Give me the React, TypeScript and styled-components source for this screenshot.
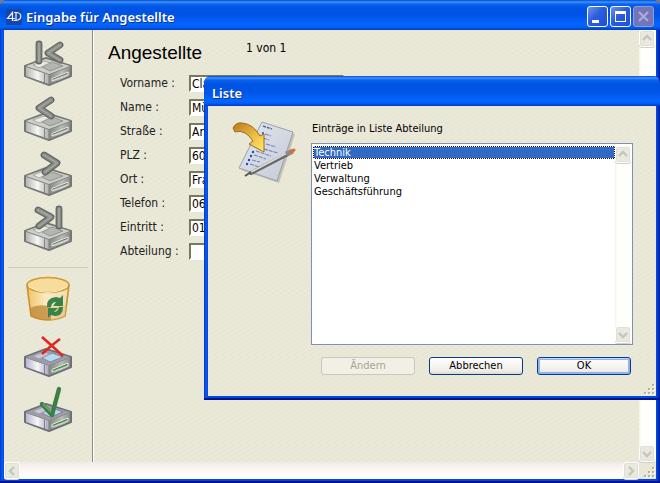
import React, { useId, useState } from "react";
import styled, { createGlobalStyle } from "styled-components";

const uiFont = '"DejaVu Sans Condensed", "DejaVu Sans", "Noto Sans", sans-serif';
const titleFont = '"Noto Sans", "Open Sans", sans-serif';

const GlobalStyle = createGlobalStyle`
  *, *::before, *::after { box-sizing: border-box; }
  body { margin: 0; background: #7b7b7b; font-family: ${uiFont}; color: #000; }
  button, input, select { font: inherit; color: inherit; margin: 0; }
`;

const texture = `
  repeating-linear-gradient(150deg, rgba(255,255,255,.16) 0 1px, transparent 1px 4px),
  #e8e6d4`;

const Frame = styled.div`
  display: flex;
  flex-direction: column;
  background: linear-gradient(90deg, #0034c8, #0a5cf5 2px, #0048e0 4px, #0048e0 calc(100% - 3px), #00138c);
  padding: 0 4px 4px;
  border-radius: 7px 7px 0 0;
  box-shadow: inset 0 -2px #00138c;
  overflow: hidden;
`;

const MainFrame = styled(Frame)`
  position: relative;
  min-height: 100vh;
`;

const DialogFrame = styled(Frame)`
  position: absolute;
  left: 204px;
  right: 0;
  top: 76px;
`;

const TitleBar = styled.header`
  display: flex;
  align-items: center;
  gap: 4px;
  height: 30px;
  margin: 0 -4px;
  padding: 3px 6px 0;
  flex: none;
  background: linear-gradient(#0848c8, #3c96ff 2px, #0a64f0 4px, #0054e3 8px, #0054e6 16px, #0466ff 24px, #0360f8 27px, #003cc0);
`;

const Title = styled.h1<{ $indent?: boolean }>`
  flex: 1;
  margin: 0;
  padding-left: ${(p) => (p.$indent ? 2 : 0)}px;
  font: 600 13px/18px ${titleFont};
  color: #fff;
  text-shadow: 1px 1px #0a2f8c;
`;

const Caption = styled.div`
  display: flex;
  gap: 2px;
`;

const CaptionButton = styled.button<{ $muted?: boolean }>`
  width: 21px;
  height: 21px;
  padding: 0;
  display: grid;
  place-items: center;
  border: 1px solid ${(p) => (p.$muted ? "#8d9cdc" : "#fff")};
  border-radius: 3px;
  background: ${(p) =>
    p.$muted ? "#7474b8" : "linear-gradient(135deg, #6c94f0, #2c5cdc 45%, #1c50d8)"};
`;

const Workspace = styled.div`
  flex: 1;
  display: grid;
  grid-template-columns: 89px 1fr 17px;
  grid-template-rows: 1fr 17px;
  background: ${texture};
`;

const Toolbar = styled.nav`
  display: flex;
  flex-direction: column;
  align-items: center;
  gap: 7px;
  padding: 8px 4px 0;
  border-right: 1px solid #8c8c80;
`;

const ToolButton = styled.button`
  width: 48px;
  height: 48px;
  padding: 0;
  border: 0;
  background: none;
  svg { display: block; }
`;

const Separator = styled.hr`
  width: 100%;
  margin: 9px 0 -1px;
  border: 0;
  border-top: 1px solid #d0cab8;
`;

const Form = styled.form`
  border-left: 1px solid #fff;
  padding: 9px 14px;
`;

const Heading = styled.div`
  display: flex;
  align-items: flex-start;
  gap: 44px;
  height: 36px;
`;

const FormTitle = styled.h2`
  margin: 0;
  font: normal 19px/27px "Liberation Sans", sans-serif;
`;

const Counter = styled.span`
  font-size: 12px;
  line-height: 18px;
`;

const Fields = styled.div`
  display: grid;
  gap: 8px;
  padding-left: 12px;
`;

const FieldRow = styled.div`
  display: grid;
  grid-template-columns: 69px 155px;
  height: 16px;
  font-size: 12px;
  line-height: 16px;
`;

const FieldLabel = styled.label`
  white-space: nowrap;
  color: #222;
`;

const Field = styled.input`
  width: 100%;
  height: 17px;
  min-width: 0;
  padding: 0 1px;
  border: 2px solid;
  border-color: #77785f #fff #fff #77785f;
  background: #fff;
`;

const ScrollTrack = styled.div<{ $horizontal?: boolean }>`
  display: flex;
  flex-direction: ${(p) => (p.$horizontal ? "row" : "column")};
  justify-content: space-between;
  background: ${(p) =>
    p.$horizontal ? "linear-gradient(#f1ebe6, #fffefc 75%)" : "linear-gradient(90deg, #f3f1e8, #fefefb 2px)"};
`;

const BottomTrack = styled(ScrollTrack)`
  grid-column: 1 / 3;
`;

const ScrollButton = styled.button`
  width: 16px;
  height: 17px;
  flex: none;
  padding: 0;
  display: grid;
  place-items: center;
  border: 1px solid #fff;
  border-radius: 3px;
  background: #eae9e0;
  box-shadow: inset 0 0 0 1px #e0dfd4, 0 1px #d2d1c2;
`;

const GripCorner = styled.div`
  display: flex;
  justify-content: flex-end;
  align-items: flex-end;
  padding: 0 1px 1px 0;
`;

const DialogGripCorner = styled(GripCorner)`
  padding-top: 9px;
`;

const DialogBody = styled.div`
  background: ${texture};
`;

const DialogContent = styled.div`
  display: grid;
  grid-template-columns: 64px 1fr;
  gap: 15px;
  padding: 14px 23px 0 24px;
`;

const ListColumn = styled.div`
  display: flex;
  flex-direction: column;
`;

const ListLabel = styled.label`
  padding-left: 1px;
  height: 23px;
  font-size: 11px;
  line-height: 18px;
`;

const ListFrame = styled.div`
  display: flex;
  height: 202px;
  border: 1px solid #7f8fb2;
  padding: 2px 1px 1px;
  background: #fff;
`;

const ListBox = styled.select`
  flex: 1;
  min-width: 0;
  border: 0;
  padding: 0;
  outline: 0;
  overflow: hidden;
  background: #fff;
  font-size: 11px;

  option {
    min-height: 13px;
    height: 13px;
    padding: 0 1px;
    line-height: 13px;
  }
  option:checked {
    background: linear-gradient(#316ac5, #316ac5);
    -webkit-text-fill-color: #fff;
    outline: 1px dotted #fff;
    outline-offset: -1px;
    box-shadow: inset 0 0 0 1px #111;
  }
`;

const Actions = styled.div`
  display: flex;
  justify-content: flex-end;
  gap: 14px;
  padding: 12px 2px 0 0;
`;

const PushButton = styled.button<{ $primary?: boolean }>`
  width: 94px;
  height: 18px;
  padding: 0;
  font-size: 11px;
  line-height: 14px;
  border: 1px solid #0a3a86;
  border-radius: 3px;
  background: linear-gradient(#fff, #f0eeea 80%, #dcd8d0);
  box-shadow: ${(p) => (p.$primary ? "inset 0 1px #bcd8ff, inset 0 0 0 2px #8fb2f2" : "none")};

  &:disabled {
    color: #a5a394;
    border-color: #cac8b8;
    background: #f2f0e6;
  }
`;

type Point = [number, number];

function Chevron({ kind }: { kind: "up" | "down" | "left" | "right" }) {
  const paths = {
    up: "M1 6 5 2l4 4",
    down: "M1 3l4 4 4-4",
    left: "M7 1 3 5l4 4",
    right: "M3 1l4 4-4 4",
  };
  return (
    <svg width="10" height="10" viewBox="0 0 10 10" aria-hidden="true">
      <path d={paths[kind]} fill="none" stroke="#c5c6ba" strokeWidth="2.4" />
    </svg>
  );
}

function Grip() {
  const dots: Point[] = [[8, 0], [4, 4], [8, 4], [0, 8], [4, 8], [8, 8]];
  return (
    <svg width="11" height="11" viewBox="0 0 11 11" aria-hidden="true">
      {dots.map(([x, y]) => (
        <g key={`${x}-${y}`}>
          <rect x={x + 1} y={y + 1} width="2" height="2" fill="#fff" />
          <rect x={x} y={y} width="2" height="2" fill="#b5b3a0" />
        </g>
      ))}
    </svg>
  );
}

function Drive({ active, children }: { active?: boolean; children?: React.ReactNode }) {
  const id = useId();
  const edge = active ? "#6d6f78" : "#747772";
  return (
    <svg width="48" height="48" viewBox="0 0 48 48" aria-hidden="true">
      <defs>
        <linearGradient id={`${id}l`}>
          <stop offset="0" stopColor={active ? "#b9b6d2" : "#b4b6b0"} />
          <stop offset=".5" stopColor="#f6f6f6" />
          <stop offset="1" stopColor={active ? "#a9a6c2" : "#adafa9"} />
        </linearGradient>
        <linearGradient id={`${id}r`}>
          <stop offset="0" stopColor="#858783" />
          <stop offset=".6" stopColor="#b9bbb6" />
          <stop offset="1" stopColor="#8b8d89" />
        </linearGradient>
      </defs>
      <path d="M1 28 22 20 47 28 47 38 25 47 1 38Z" fill="#cfd0ca" stroke={edge} strokeWidth="2" strokeLinejoin="round" />
      <path d="M2 28 22 21 46 28 25 36Z" fill={active ? "#9c9cab" : "#cdcfc9"} />
      <path d="M2 29 25 36.5V46L2 38Z" fill={`url(#${id}l)`} />
      <path d="M25 36.5 46 29V37.5L25 46Z" fill={`url(#${id}r)`} />
      <path d="M18 29 28 24 39 28 26 33Z" fill={active ? "#b7daf2" : "#b4b6b0"} stroke={active ? "#858898" : "#92958f"} />
      <path d="M9 27 20 23 26 25 15 30Z" fill={active ? "#c9c6d8" : "#e9e9e4"} stroke="#9b9d99" strokeWidth=".8" />
      <path d="M2 28.5 25 36.5 46 28.5M25 36.5V46M20.5 35.5V45" fill="none" stroke="#80827e" />
      <path d="M28 40.5 44 34V37L28 43Z" fill={active ? "#358040" : "#6a6d68"} stroke="#eceee8" />
      <path d="M29 42 43 36.5" stroke={active ? "#8fc48a" : "#d5d7d0"} strokeWidth=".8" />
      {children}
    </svg>
  );
}

function NavStroke({ d }: { d: string }) {
  return (
    <g fill="none" strokeLinecap="round" strokeLinejoin="round">
      <path d={d} stroke="#62665f" strokeWidth="6.8" />
      <path d={d} stroke="#848882" strokeWidth="4.6" />
      <path d={d} stroke="#a0a29e" strokeWidth="2" />
    </g>
  );
}

function BinIcon() {
  const id = useId();
  return (
    <svg width="48" height="48" viewBox="0 0 48 48" aria-hidden="true">
      <defs>
        <linearGradient id={id}>
          <stop offset="0" stopColor="#efc468" />
          <stop offset=".45" stopColor="#faeac0" />
          <stop offset="1" stopColor="#f0dcae" />
        </linearGradient>
      </defs>
      <path d="M3 11 7 42Q24 50 41 42L45 11Z" fill={`url(#${id})`} stroke="#c9922c" strokeWidth="1.6" />
      <path d="M6 34Q16 29 27 33V46Q14 46 7 42Z" fill="#c08a3a" opacity=".8" />
      <path d="M27 33 42 31 41 42Q35 45 27 46Z" fill="#e8c88a" opacity=".7" />
      <ellipse cx="24" cy="11" rx="21" ry="7.5" fill="#f8dc9c" stroke="#d19b35" strokeWidth="1.7" />
      <path d="M5 13Q24 24 43 13" fill="none" stroke="#fff3cf" />
      <path d="M23 33Q22 24 32 23L36 24 39 21V32H29L32 28Q28 28 27 33Z" fill="#36834b" />
      <path d="M39 33Q39 42 31 42L27 41 24 44V34H34L30 38Q34 38 35 33Z" fill="#36834b" />
    </svg>
  );
}

function ListIcon() {
  const id = useId();
  return (
    <svg width="64" height="64" viewBox="0 0 64 64" aria-hidden="true">
      <defs>
        <linearGradient id={`${id}a`} x1="0" y1="0" x2="1" y2="1">
          <stop offset="0" stopColor="#b5781c" />
          <stop offset=".55" stopColor="#eebb42" />
          <stop offset="1" stopColor="#fff06c" />
        </linearGradient>
        <linearGradient id={`${id}p`} x1="0" y1="0" x2="1" y2="1">
          <stop offset="0" stopColor="#e2e6ef" />
          <stop offset="1" stopColor="#c5cad8" />
        </linearGradient>
      </defs>
      <path d="M32 4 63 14 47 63 9 50Z" fill="#b1b1a4" opacity=".7" />
      <path d="M30 2 61 12 45 61 7 48Z" fill={`url(#${id}p)`} stroke="#9ba0ac" />
      <path d="M31 6 40 9" stroke="#5b6c9c" strokeWidth="1.5" strokeDasharray="3 1" />
      <g stroke="#7585b2" strokeWidth="1.1" strokeDasharray="4 1">
        <path d="M33 14 39 16M31 18 37 20M34 24 44 27M32 29 46 33M24 31 39 36M22 35 34 39M20 40 28 42M18 44 27 47" />
      </g>
      <g fill="#244ca8">
        <circle cx="31" cy="13" r="1" /><circle cx="29" cy="17" r="1" />
        <circle cx="21" cy="32" r="1.2" /><circle cx="19" cy="36" r="1.2" />
        <circle cx="17" cy="40" r="1.2" /><circle cx="15" cy="44" r="1.2" />
      </g>
      <path d="M1 8Q4 2 10 3Q20 4 26 13L28 16 32 14 32 32 17 24 21 21Q17 15 13 13Q8 10 3 12Z" fill={`url(#${id}a)`} stroke="#986d20" strokeLinejoin="round" />
      <path d="M19 53 58 33" stroke="#676a68" strokeWidth="4" strokeLinecap="round" />
      <path d="M19 52 57 32" stroke="#d9dbd6" strokeWidth="1.8" />
      <path d="M13 56 19 52" stroke="#555" strokeWidth="2" />
      <path d="M54 34 61 31" stroke="#8c8d8a" strokeWidth="5" />
      <path d="M59 32 62 30" stroke="#dc6a3c" strokeWidth="3" strokeLinecap="round" />
    </svg>
  );
}

function LogoIcon() {
  return (
    <svg width="16" height="16" viewBox="0 0 16 16" aria-label="4D">
      <rect width="16" height="16" fill="#1546a8" />
      <path d="M6.500 12V3.500L1.500 9.500H9M8 3.500h2.500Q15 4 14.800 7.500T10 11.500H7.500M10 4v7" fill="none" stroke="#e8f1ff" strokeWidth="1.2" />
    </svg>
  );
}

const navigation = [
  { label: "Erster Datensatz", d: "M15 6V23M36 7 24 15 36 22" },
  { label: "Vorheriger Datensatz", d: "M27 7 15 15 27 23" },
  { label: "Nächster Datensatz", d: "M20 7 33 15 21 24" },
  { label: "Letzter Datensatz", d: "M14 7 27 14 15 23M35 6V23" },
];

const fields = [
  ["Vorname", "Cla"],
  ["Name", "Mü"],
  ["Straße", "An"],
  ["PLZ", "60"],
  ["Ort", "Fra"],
  ["Telefon", "06"],
  ["Eintritt", "01"],
  ["Abteilung", ""],
];

const entries = ["Technik", "Vertrieb", "Verwaltung", "Geschäftsführung"];

function VerticalScroll() {
  return (
    <ScrollTrack>
      <ScrollButton type="button" aria-label="Nach oben"><Chevron kind="up" /></ScrollButton>
      <ScrollButton type="button" aria-label="Nach unten"><Chevron kind="down" /></ScrollButton>
    </ScrollTrack>
  );
}

function ListDialog() {
  const [entry, setEntry] = useState(entries[0]);
  return (
    <DialogFrame role="dialog" aria-labelledby="dialog-title">
      <TitleBar>
        <Title as="h2" id="dialog-title" $indent>Liste</Title>
      </TitleBar>
      <DialogBody>
        <DialogContent>
          <ListIcon />
          <ListColumn>
            <ListLabel htmlFor="entries">Einträge in Liste Abteilung</ListLabel>
            <ListFrame>
              <ListBox id="entries" size={15} value={entry} onChange={(e) => setEntry(e.target.value)}>
                {entries.map((name) => <option key={name}>{name}</option>)}
              </ListBox>
              <VerticalScroll />
            </ListFrame>
            <Actions>
              <PushButton type="button" disabled>Ändern</PushButton>
              <PushButton type="button">Abbrechen</PushButton>
              <PushButton type="button" $primary>OK</PushButton>
            </Actions>
          </ListColumn>
        </DialogContent>
        <DialogGripCorner><Grip /></DialogGripCorner>
      </DialogBody>
    </DialogFrame>
  );
}

export default function App() {
  return (
    <>
      <GlobalStyle />
      <MainFrame>
        <TitleBar>
          <LogoIcon />
          <Title>Eingabe für Angestellte</Title>
          <Caption>
            <CaptionButton type="button" aria-label="Minimieren">
              <svg width="15" height="15" viewBox="0 0 15 15"><path d="M2 11h7v3H2z" fill="#fff" /></svg>
            </CaptionButton>
            <CaptionButton type="button" aria-label="Maximieren">
              <svg width="15" height="15" viewBox="0 0 15 15"><path d="M2 2h11v11H2zM3 5v7h9V5z" fill="#fff" fillRule="evenodd" /></svg>
            </CaptionButton>
            <CaptionButton type="button" aria-label="Schließen" $muted>
              <svg width="15" height="15" viewBox="0 0 15 15"><path d="M3 3 12 12M12 3 3 12" stroke="#a9add9" strokeWidth="2.2" /></svg>
            </CaptionButton>
          </Caption>
        </TitleBar>
        <Workspace>
          <Toolbar aria-label="Datensatz">
            {navigation.map(({ label, d }) => (
              <ToolButton key={label} type="button" aria-label={label}>
                <Drive><NavStroke d={d} /></Drive>
              </ToolButton>
            ))}
            <Separator />
            <ToolButton type="button" aria-label="Löschen"><BinIcon /></ToolButton>
            <ToolButton type="button" aria-label="Abbrechen">
              <Drive active>
                <path d="M18 8 27 16 39 27M36 10 27 17 18 25" fill="none" stroke="#e22626" strokeWidth="2.6" />
              </Drive>
            </ToolButton>
            <ToolButton type="button" aria-label="Sichern">
              <Drive active>
                <path d="M18 20 28 31 35 5" fill="none" stroke="#3c7f45" strokeWidth="4.4" strokeLinecap="round" strokeLinejoin="round" />
                <path d="M19 20 27 28" fill="none" stroke="#79a878" strokeWidth="1.2" />
              </Drive>
            </ToolButton>
          </Toolbar>
          <Form>
            <Heading>
              <FormTitle>Angestellte</FormTitle>
              <Counter>1 von 1</Counter>
            </Heading>
            <Fields>
              {fields.map(([name, value]) => (
                <FieldRow key={name}>
                  <FieldLabel htmlFor={name}>{name} :</FieldLabel>
                  <Field id={name} defaultValue={value} />
                </FieldRow>
              ))}
            </Fields>
          </Form>
          <VerticalScroll />
          <BottomTrack $horizontal>
            <ScrollButton type="button" aria-label="Nach links"><Chevron kind="left" /></ScrollButton>
            <ScrollButton type="button" aria-label="Nach rechts"><Chevron kind="right" /></ScrollButton>
          </BottomTrack>
          <GripCorner><Grip /></GripCorner>
        </Workspace>
        <ListDialog />
      </MainFrame>
    </>
  );
}
